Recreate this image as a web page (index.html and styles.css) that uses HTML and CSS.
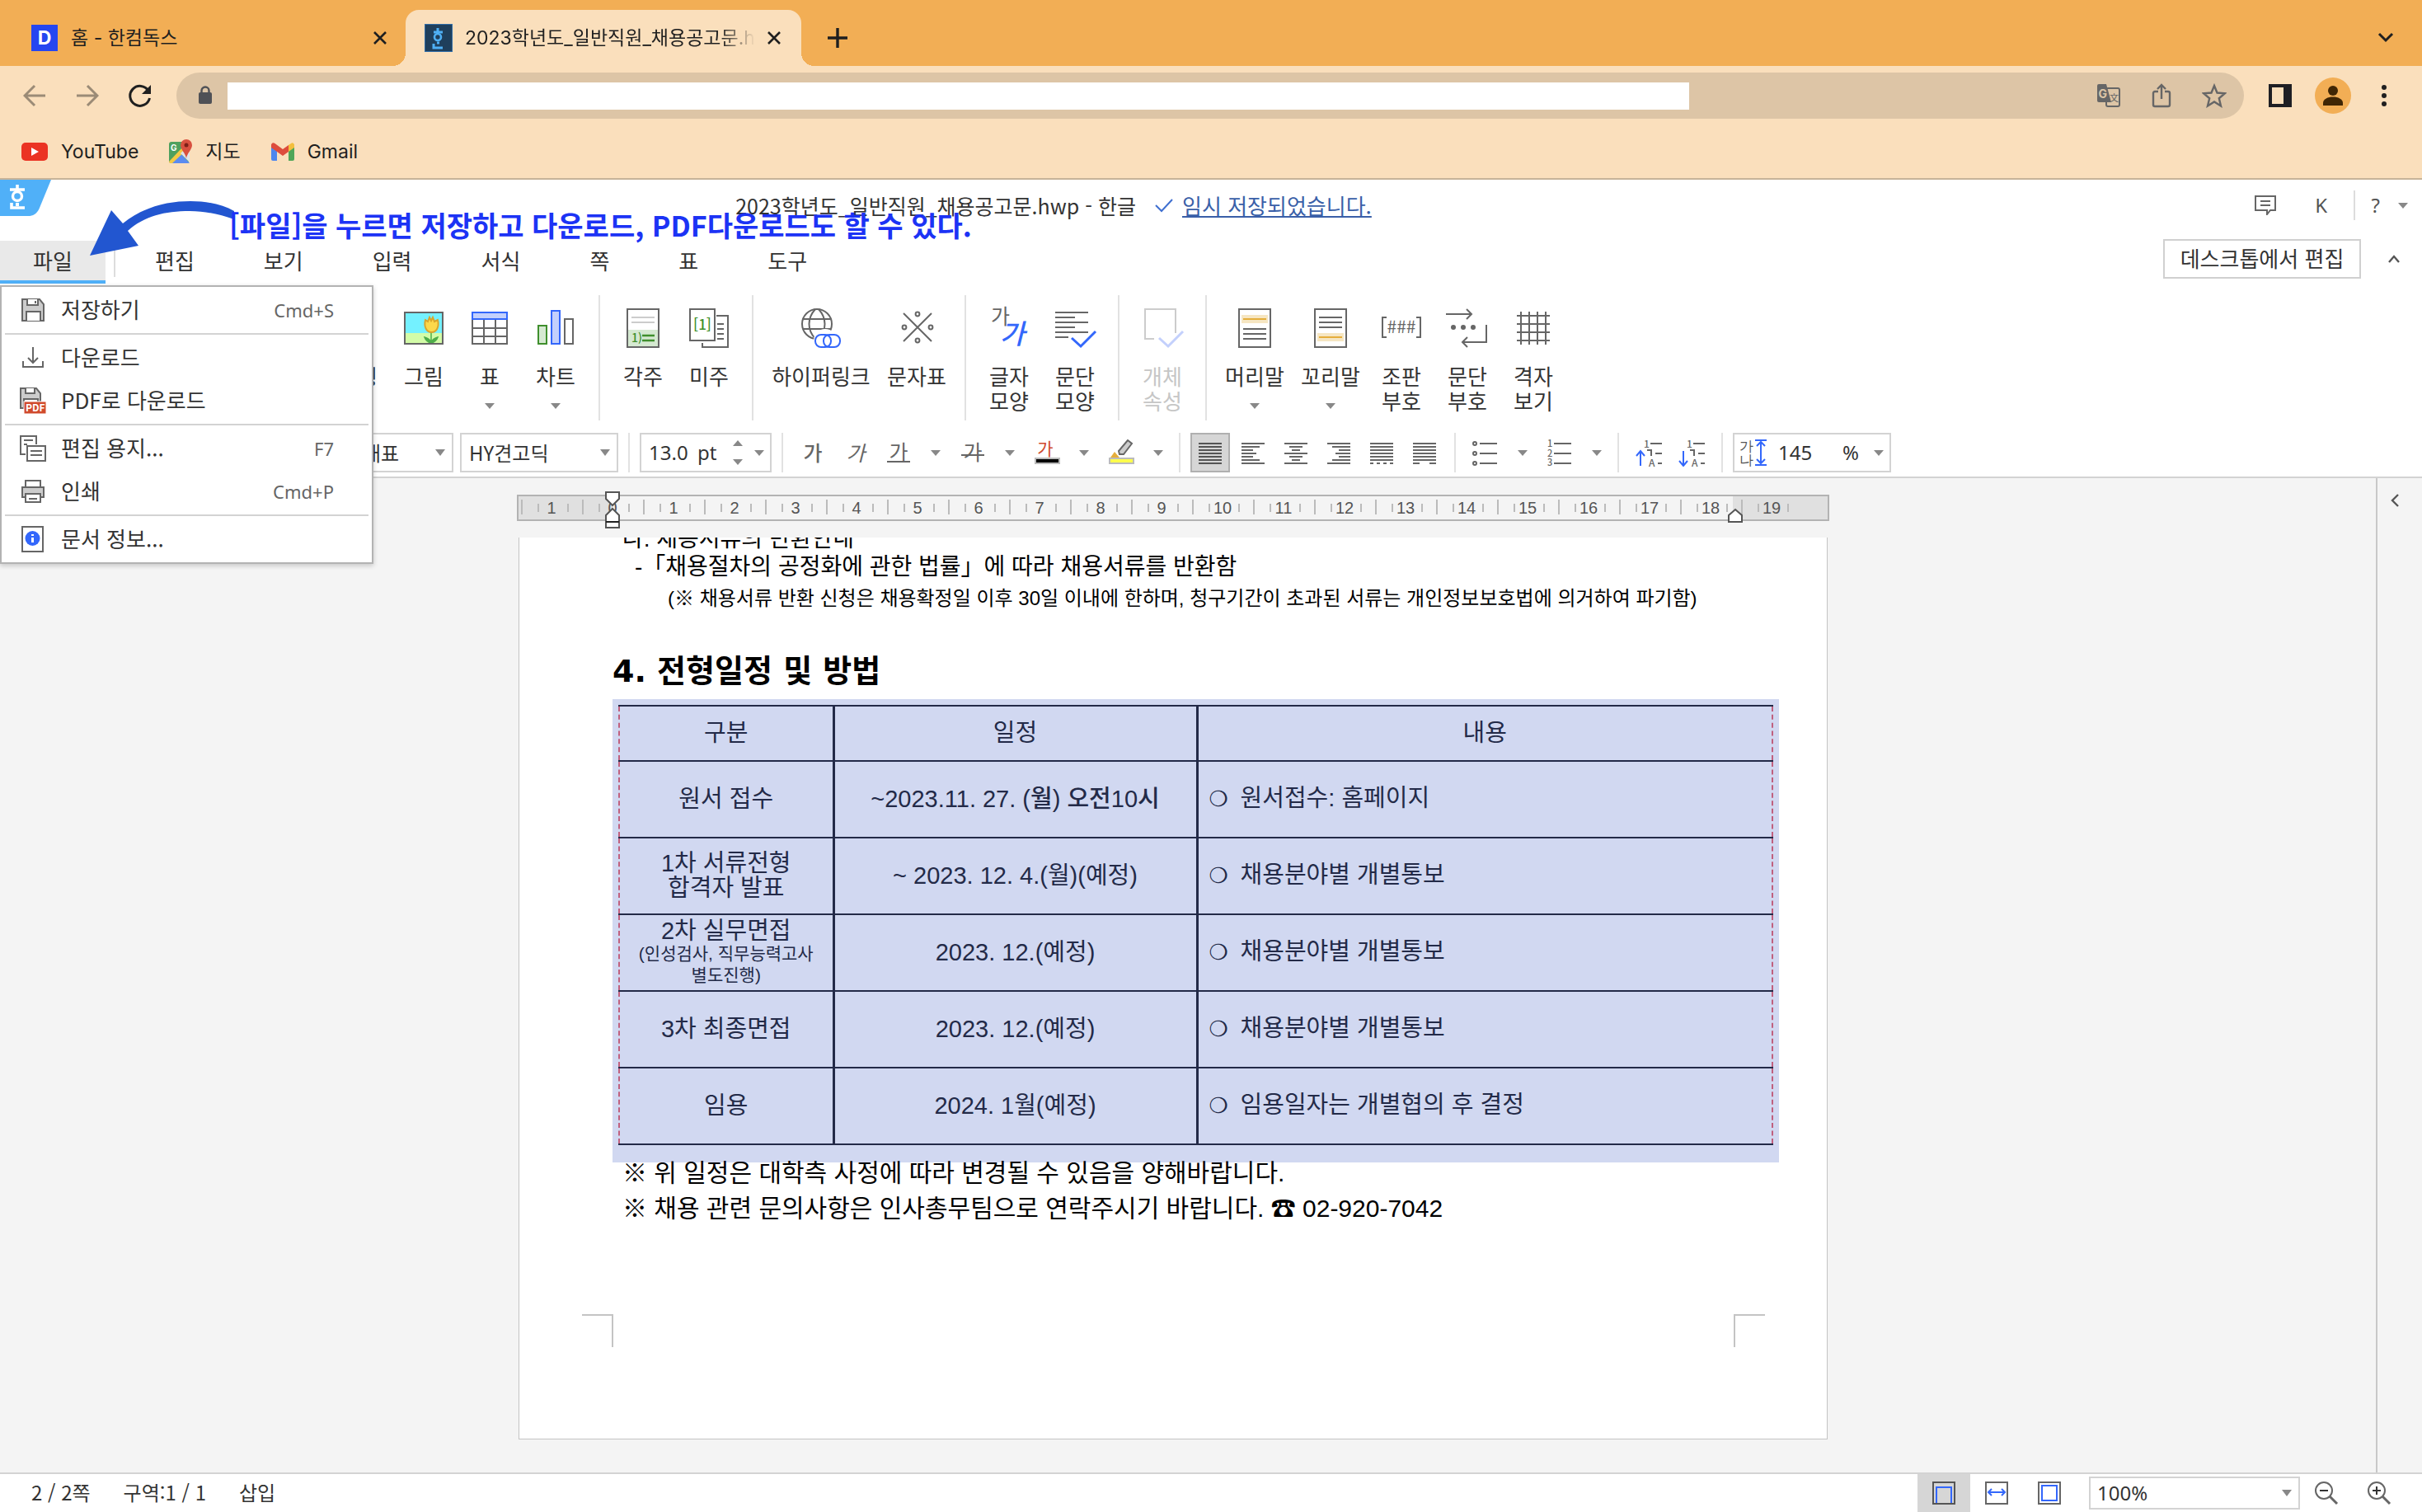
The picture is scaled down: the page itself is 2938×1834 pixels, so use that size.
FILE: index.html
```html
<!DOCTYPE html>
<html lang="ko">
<head>
<meta charset="utf-8">
<title>2023학년도_일반직원_채용공고문.hwp - 한글</title>
<link rel="stylesheet" href="styles.css">
</head>
<body>
<header class="browser">
  <div class="tabstrip">
    <div class="tab">
      <span class="fav fav-d">D</span>
      <span class="tab-title">홈 - 한컴독스</span>
      <button class="tab-x" aria-label="탭 닫기"><svg width="18" height="18" viewBox="0 0 18 18"><path d="M2 2L16 16M16 2L2 16" stroke="#1f1f1f" stroke-width="2.600"/></svg></button>
    </div>
    <div class="tab tab-active">
      <span class="fav fav-h"><svg width="32" height="32" viewBox="0 0 32 32"><path d="M15 4V9M10 9H21M21 28H10V23" fill="none" stroke="#4fb0f5" stroke-width="3"/><circle cx="15" cy="15" r="4" fill="none" stroke="#4fb0f5" stroke-width="2.600"/><path d="M14 22H17" stroke="#4fb0f5" stroke-width="3"/></svg></span>
      <span class="tab-title tab-fade">2023학년도_일반직원_채용공고문.hwp</span>
      <button class="tab-x" aria-label="탭 닫기"><svg width="18" height="18" viewBox="0 0 18 18"><path d="M2 2L16 16M16 2L2 16" stroke="#1f1f1f" stroke-width="2.600"/></svg></button>
    </div>
    <button class="tab-new" aria-label="새 탭"><svg width="24" height="24" viewBox="0 0 24 24"><path d="M12 0V24M0 12H24" stroke="#1f1f1f" stroke-width="3.400"/></svg></button>
    <button class="tab-search" aria-label="탭 검색"><svg width="20" height="14" viewBox="0 0 20 14"><path d="M2 2L10 10L18 2" fill="none" stroke="#1f1f1f" stroke-width="3"/></svg></button>
  </div>
  <div class="navbar">
    <button aria-label="뒤로"><svg width="28" height="28" viewBox="0 0 28 28"><path d="M27 14H3M14 2L2 14L14 26" fill="none" stroke="#9b8b76" stroke-width="3"/></svg></button>
    <button aria-label="앞으로"><svg width="28" height="28" viewBox="0 0 28 28"><path d="M1 14H25M14 2L26 14L14 26" fill="none" stroke="#9b8b76" stroke-width="3"/></svg></button>
    <button aria-label="새로고침"><svg width="28" height="28" viewBox="0 0 28 28"><path d="M24 8A12 12 0 1 0 25.500 17" fill="none" stroke="#1f1f1f" stroke-width="3"/><path d="M27 1V12H16Z" fill="#1f1f1f"/></svg></button>
    <div class="omnibox">
      <svg width="18" height="24" viewBox="0 0 18 24"><path d="M4.500 10V6A4.500 4.500 0 0 1 13.500 6V10" fill="none" stroke="#4f5156" stroke-width="2.400"/><rect x="1" y="8" width="16" height="14" rx="2" fill="#4f5156"/></svg>
      <input class="url" type="text" aria-label="주소">
      <button aria-label="번역"><svg width="32" height="32" viewBox="0 0 32 32"><rect x="13" y="7" width="16" height="22" rx="2" fill="none" stroke="#666" stroke-width="2"/><path d="M4 2H13L19 24H4A2 2 0 0 1 2 22V4A2 2 0 0 1 4 2Z" fill="#666"/><text x="3.500" y="19" font-size="14" font-weight="700" fill="#ddc5a6">G</text><text x="17" y="23" font-size="11" fill="#666">文</text></svg></button>
      <button aria-label="공유"><svg width="26" height="30" viewBox="0 0 26 30"><path d="M9 10H5A2 2 0 0 0 3 12V26A2 2 0 0 0 5 28H21A2 2 0 0 0 23 26V12A2 2 0 0 0 21 10H17M13 19V3M8 7L13 2L18 7" fill="none" stroke="#666" stroke-width="2.400"/></svg></button>
      <button aria-label="북마크"><svg width="30" height="30" viewBox="0 0 30 30"><path d="M15 3L18.500 11.500L28 12.200L20.800 18.300L23 27.500L15 22.500L7 27.500L9.200 18.300L2 12.200L11.500 11.500Z" fill="none" stroke="#666" stroke-width="2.400"/></svg></button>
    </div>
    <button aria-label="사이드 패널"><svg width="28" height="28" viewBox="0 0 28 28"><rect x="2" y="2" width="24" height="24" fill="none" stroke="#1f1f24" stroke-width="4"/><rect x="18" y="0" width="10" height="28" fill="#1f1f24"/></svg></button>
    <button class="profile" aria-label="프로필"><svg width="44" height="44" viewBox="0 0 44 44"><circle cx="22" cy="22" r="22" fill="#f2ae55"/><circle cx="22" cy="16" r="6" fill="#402604"/><path d="M10 34V31C10 26 16 23.500 22 23.500S34 26 34 31V34Z" fill="#402604"/></svg></button>
    <button aria-label="메뉴"><svg width="8" height="28" viewBox="0 0 8 28"><circle cx="4" cy="4" r="3" fill="#1f1f1f"/><circle cx="4" cy="14" r="3" fill="#1f1f1f"/><circle cx="4" cy="24" r="3" fill="#1f1f1f"/></svg></button>
  </div>
  <nav class="bookmarks">
    <a href="#"><svg width="34" height="24" viewBox="0 0 34 24"><rect x="1" y="1" width="32" height="22" rx="5" fill="#eb3323"/><path d="M13 7L22 12L13 17Z" fill="#fff"/></svg>YouTube</a>
    <a href="#"><svg width="30" height="32" viewBox="0 0 30 32"><rect x="1" y="4" width="24" height="26" rx="3" fill="#4ea05e"/><path d="M2 30L14 17L26 30Z" fill="#5b8bf0"/><path d="M1 28L18 10L22 14L5 30H2Z" fill="#f3c944"/><path d="M15 18L26 29V18L20 13Z" fill="#dfe3e8"/><text x="3" y="15" font-size="10" font-weight="700" fill="#fff">G</text><path d="M22 24C21 18 15 13 15 8A7 7 0 0 1 29 8C29 13 23 18 22 24Z" fill="#d8503f"/><circle cx="22" cy="8" r="2.500" fill="#7d2018"/></svg>지도</a>
    <a href="#"><svg width="30" height="24" viewBox="0 0 30 24"><path d="M1 3V21A2 2 0 0 0 3 23H8V9Z" fill="#4e86ee"/><path d="M29 3V21A2 2 0 0 1 27 23H22V9Z" fill="#4fa658"/><path d="M22 4L25 2C27 0 29 2 29 4V7L22 12Z" fill="#f3bf3e"/><path d="M1 4C1 2 3 0 5.500 2L15 9L22 4V12L15 17L1 7Z" fill="#dd4c3c"/></svg>Gmail</a>
  </nav>
</header>

<div class="titlebar">
  <svg class="logo" width="62" height="44" viewBox="0 0 62 44"><path d="M0 0H62L48 34C45 41 41 44 34 44H0Z" fill="#50b0f8"/><path d="M21 6V12M12 12H30M30 34H14V28" fill="none" stroke="#fff" stroke-width="3.600"/><circle cx="21" cy="20" r="5.500" fill="none" stroke="#fff" stroke-width="3.400"/><path d="M19 30H23" stroke="#fff" stroke-width="4"/></svg>
  <div class="doc-title">
    <span>2023학년도_일반직원_채용공고문.hwp - 한글</span>
    <a href="#"><svg width="24" height="18" viewBox="0 0 24 18"><path d="M2 9L9 16L22 2" fill="none" stroke="#3f6fd0" stroke-width="2"/></svg><u>임시 저장되었습니다.</u></a>
  </div>
  <div class="title-tools">
    <button aria-label="메모"><svg width="26" height="24" viewBox="0 0 26 24"><path d="M1 1H25V18H19L15 23V18H1Z" fill="none" stroke="#666" stroke-width="2"/><path d="M7 7H19M7 12H19" stroke="#666" stroke-width="2"/></svg></button>
    <button class="user">K</button>
    <button class="help">?<i class="caret"></i></button>
  </div>
</div>

<div class="menubar">
  <div class="file">
    <button class="file-tab">파일</button>
    <div class="file-menu" role="menu">
      <button role="menuitem"><svg width="32" height="32" viewBox="0 0 32 32"><path d="M3 3H24L29 9V29H3Z" fill="#ccc" stroke="#666" stroke-width="2"/><path d="M9 3V10H22V3M8 29V18H25V29" fill="#fff" stroke="#666" stroke-width="2"/><path d="M19 5V8" stroke="#666" stroke-width="2"/></svg><span>저장하기</span><kbd>Cmd+S</kbd></button>
      <hr>
      <button role="menuitem"><svg width="32" height="32" viewBox="0 0 32 32"><path d="M16 3V22M10 16L16 22L22 16M4 20V27H28V20" fill="none" stroke="#666" stroke-width="2"/></svg><span>다운로드</span></button>
      <button role="menuitem"><svg width="32" height="32" viewBox="0 0 32 32"><path d="M1 1H20L25 7V25H1Z" fill="#ccc" stroke="#666" stroke-width="2"/><path d="M7 1V7H18V1M5 25V14H22V25" fill="#fff" stroke="#666" stroke-width="2"/><rect x="5" y="17" width="27" height="15" fill="#d04a2c" stroke="#fff"/><text x="7" y="29" font-size="12" font-weight="700" fill="#fff">PDF</text></svg><span>PDF로 다운로드</span></button>
      <hr>
      <button role="menuitem"><svg width="32" height="32" viewBox="0 0 32 32"><path d="M7 23H1V1H20V11M5 6H16M5 11H9" fill="none" stroke="#666" stroke-width="2"/><path d="M9 13H31V31H9ZM13 19H27M13 24H27" fill="none" stroke="#666" stroke-width="2"/></svg><span>편집 용지...</span><kbd>F7</kbd></button>
      <button role="menuitem"><svg width="32" height="32" viewBox="0 0 32 32"><path d="M7 11V3H25V11" fill="#fff" stroke="#666" stroke-width="2"/><rect x="3" y="11" width="26" height="12" fill="#ccc" stroke="#666" stroke-width="2"/><path d="M7 19H25V29H7ZM11 25H21" fill="#fff" stroke="#666" stroke-width="2"/></svg><span>인쇄</span><kbd>Cmd+P</kbd></button>
      <hr>
      <button role="menuitem"><svg width="32" height="32" viewBox="0 0 32 32"><rect x="3" y="1" width="25" height="30" fill="#fff" stroke="#666" stroke-width="2"/><circle cx="15.500" cy="15" r="9" fill="#3367fb"/><path d="M15.500 14V20M15.500 10V12" stroke="#fff" stroke-width="3"/></svg><span>문서 정보...</span></button>
    </div>
  </div>
  <button class="menu">편집</button>
  <button class="menu">보기</button>
  <button class="menu">입력</button>
  <button class="menu">서식</button>
  <button class="menu">쪽</button>
  <button class="menu">표</button>
  <button class="menu">도구</button>
  <button class="desktop">데스크톱에서 편집</button>
  <button class="collapse" aria-label="접기"><svg width="16" height="12" viewBox="0 0 16 12"><path d="M2 10L8 3L14 10" fill="none" stroke="#555" stroke-width="2.400"/></svg></button>
  <div class="note">
    <svg width="180" height="70" viewBox="108 242 180 70"><path d="M109 310L135 255L149 271C175 250 205 244 231 244C252 244 270 248 284 256V266C266 260 250 256 230 256C200 256 175 262 155 280L168 298Z" fill="#2256d0"/></svg>
    <strong>[파일]을 누르면 저장하고 다운로드, PDF다운로드도 할 수 있다.</strong>
  </div>
</div>

<div class="ribbon">
  <div class="group">
    <button class="tool"><svg width="52" height="48"></svg>도형</button>
    <button class="tool"><svg width="52" height="48" viewBox="0 0 52 48"><rect x="3" y="5" width="46" height="38" fill="#74f1ff"/><rect x="3" y="30" width="46" height="13" fill="#d3fca8"/><path d="M35 43V29M35 42C31 41 28 38 27 35C31 36 34 38 35 42C36 38 39 36 43 35C42 38 39 41 35 42" fill="#4fae4a" stroke="#4fae4a" stroke-width="1.500"/><path d="M28 14L31 16L33 11L35 15L37 11L39 16L43 14C45 22 42 29 35.500 29S26 22 28 14Z" fill="#fbd84b" stroke="#d9a52c" stroke-width="2"/><rect x="3" y="5" width="46" height="38" fill="none" stroke="#666" stroke-width="2"/></svg>그림</button>
    <button class="tool"><svg width="52" height="48" viewBox="0 0 52 48"><path d="M5 14V43H47V14M5 24H47M5 34H47M19 14V43M33 14V43" fill="none" stroke="#666" stroke-width="2"/><rect x="5" y="5" width="42" height="8" fill="#c3d0fc" stroke="#3367fb" stroke-width="2"/></svg>표<i class="caret"></i></button>
    <button class="tool"><svg width="52" height="48" viewBox="0 0 52 48"><rect x="5" y="21" width="10" height="22" fill="#d5e9d1" stroke="#3f8f2d" stroke-width="2"/><rect x="21" y="3" width="10" height="40" fill="#c3d0fc" stroke="#3367fb" stroke-width="2"/><rect x="37" y="13" width="10" height="30" fill="#fff" stroke="#666" stroke-width="2"/></svg>차트<i class="caret"></i></button>
  </div>
  <div class="group">
    <button class="tool"><svg width="52" height="48" viewBox="0 0 52 48"><rect x="7" y="26" width="38" height="21" fill="#d5e9d1"/><path d="M12 11H40M12 17H40" stroke="#ccc" stroke-width="2"/><path d="M25 33H40M25 39H40" stroke="#3f8f2d" stroke-width="2.400"/><text x="12" y="41" font-size="14" font-weight="500" fill="#3f8f2d">1)</text><rect x="7" y="1" width="38" height="46" fill="none" stroke="#666" stroke-width="2"/></svg>각주</button>
    <button class="tool"><svg width="52" height="48" viewBox="0 0 52 48"><path d="M35 9H49V47H18V42M36 19H44M36 25H44M36 31H44M36 37H44" fill="none" stroke="#666" stroke-width="2"/><rect x="3" y="1" width="30" height="38" fill="#fff" stroke="#666" stroke-width="2"/><text x="18" y="26" font-size="17" font-weight="500" text-anchor="middle" fill="#3f8f2d">[1]</text></svg>미주</button>
  </div>
  <div class="group">
    <button class="tool tool-xl"><svg width="52" height="48" viewBox="0 0 52 48"><circle cx="21" cy="19" r="18" fill="none" stroke="#666" stroke-width="2"/><path d="M19 1C9 12 9 26 19 37M23 1C33 12 33 26 23 37M5 13H37M4 25H38" fill="none" stroke="#666" stroke-width="2"/><circle cx="31" cy="39" r="14" fill="#fff"/><rect x="19" y="32" width="19" height="15" rx="7" fill="#fff" stroke="#3367fb" stroke-width="2"/><rect x="29" y="32" width="20" height="15" rx="7" fill="none" stroke="#3367fb" stroke-width="2"/></svg>하이퍼링크</button>
    <button class="tool tool-l"><svg width="52" height="48" viewBox="0 0 52 48"><g fill="none" stroke="#666" stroke-width="2"><path d="M10 6L44 40M44 6L10 40"/><circle cx="27" cy="7" r="2.400"/><circle cx="27" cy="39" r="2.400"/><circle cx="11" cy="23" r="2.400"/><circle cx="43" cy="23" r="2.400"/></g></svg>문자표</button>
  </div>
  <div class="group">
    <button class="tool"><svg width="52" height="48" viewBox="0 0 52 48"><text x="4" y="19" font-size="25" fill="#666">가</text><text x="15" y="43" font-size="33" font-style="italic" font-weight="500" fill="#3367fb">가</text></svg>글자<br>모양</button>
    <button class="tool"><svg width="52" height="48" viewBox="0 0 52 48"><path d="M2 5H42M2 11H26M2 17H42M2 23H26M2 29H42M2 35H18" stroke="#666" stroke-width="2"/><path d="M22 36L33 46L51 28" fill="none" stroke="#3367fb" stroke-width="3"/></svg>문단<br>모양</button>
  </div>
  <div class="group">
    <button class="tool" disabled><svg width="52" height="48" viewBox="0 0 52 48"><path d="M42 30V1H5V37H16" fill="none" stroke="#ccc" stroke-width="2"/><path d="M22 36L33 46L51 28" fill="none" stroke="#c3d0fc" stroke-width="3"/></svg>개체<br>속성</button>
  </div>
  <div class="group group-last">
    <button class="tool tool-l"><svg width="52" height="48" viewBox="0 0 52 48"><rect x="7" y="1" width="38" height="46" fill="#fff" stroke="#666" stroke-width="2"/><rect x="10" y="8" width="32" height="10" fill="#f6e6c2"/><path d="M12 13H40" stroke="#e5ae3c" stroke-width="2"/><path d="M12 25H40M12 31H40M12 37H40" stroke="#666" stroke-width="2"/></svg>머리말<i class="caret"></i></button>
    <button class="tool tool-l"><svg width="52" height="48" viewBox="0 0 52 48"><rect x="7" y="1" width="38" height="46" fill="#fff" stroke="#666" stroke-width="2"/><rect x="10" y="30" width="32" height="10" fill="#f6e6c2"/><path d="M12 35H40" stroke="#e5ae3c" stroke-width="2"/><path d="M12 11H40M12 17H40M12 23H40" stroke="#666" stroke-width="2"/></svg>꼬리말<i class="caret"></i></button>
    <button class="tool"><svg width="52" height="48" viewBox="0 0 52 48"><path d="M8 11H3V35H8M44 11H49V35H44" fill="none" stroke="#666" stroke-width="2"/><text x="26" y="30" font-size="21" text-anchor="middle" fill="#666">###</text></svg>조판<br>부호</button>
    <button class="tool"><svg width="52" height="48" viewBox="0 0 52 48"><path d="M0 7H31M25 1L31 7L25 13M49 20V41H20M26 35L20 41L26 47" fill="none" stroke="#666" stroke-width="2"/><circle cx="9" cy="23" r="3" fill="#666"/><circle cx="21" cy="23" r="3" fill="#666"/><circle cx="33" cy="23" r="3" fill="#666"/></svg>문단<br>부호</button>
    <button class="tool"><svg width="52" height="48" viewBox="0 0 52 48"><path d="M11 4V44M21 4V44M31 4V44M41 4V44M6 9H46M6 19H46M6 29H46M6 39H46" stroke="#666" stroke-width="2"/></svg>격자<br>보기</button>
  </div>
</div>

<div class="format">
  <select class="sel sel-lang" aria-label="언어"><option>대표</option></select>
  <select class="sel sel-font" aria-label="글꼴"><option>HY견고딕</option></select>
  <span class="sep"></span>
  <div class="num num-size"><input type="text" value="13.0" aria-label="글자 크기"><span>pt</span><span class="spin"><i class="caret caret-up"></i><i class="caret"></i></span><i class="caret"></i></div>
  <span class="sep"></span>
  <div class="set">
    <button aria-label="진하게"><svg width="32" height="32" viewBox="0 0 32 32"><text x="16" y="26" font-size="25" font-weight="500" text-anchor="middle" fill="#666">가</text></svg></button>
    <button aria-label="기울임"><svg width="32" height="32" viewBox="0 0 32 32"><text x="16" y="26" font-size="25" font-style="italic" text-anchor="middle" fill="#666">가</text></svg></button>
    <button aria-label="밑줄"><svg width="32" height="32" viewBox="0 0 32 32"><text x="16" y="25" font-size="25" text-anchor="middle" fill="#666">가</text><path d="M2 27H30" stroke="#666" stroke-width="2"/></svg></button>
    <button class="drop" aria-label="밑줄 종류"><i class="caret"></i></button>
    <button aria-label="취소선"><svg width="32" height="32" viewBox="0 0 32 32"><text x="16" y="25" font-size="25" text-anchor="middle" fill="#666">가</text><path d="M2 19H30" stroke="#666" stroke-width="2"/></svg></button>
    <button class="drop" aria-label="취소선 종류"><i class="caret"></i></button>
    <button aria-label="글자 색"><svg width="32" height="32" viewBox="0 0 32 32"><text x="14" y="19" font-size="21" text-anchor="middle" fill="#d04a2c">가</text><rect x="2" y="23" width="29" height="6" stroke="#bbb" stroke-width="2"/></svg></button>
    <button class="drop" aria-label="글자 색 선택"><i class="caret"></i></button>
    <button aria-label="형광펜"><svg width="32" height="32" viewBox="0 0 32 32"><path d="M24 1L29 5L19 18H14L13 14Z" fill="#ccc" stroke="#666" stroke-width="2"/><path d="M8 15L14 22H3Z" fill="#e5ae3c"/><rect x="2" y="23" width="29" height="6" fill="#ffff4d" stroke="#bbb" stroke-width="2"/></svg></button>
    <button class="drop" aria-label="형광펜 색"><i class="caret"></i></button>
  </div>
  <span class="sep"></span>
  <div class="set">
    <button class="on" aria-label="양쪽 정렬"><svg width="32" height="32" viewBox="0 0 32 32"><path d="M2 5H30M2 9H30M2 13H30M2 17H30M2 21H30M2 25H30M2 29H30" stroke="#555" stroke-width="2"/></svg></button>
    <button aria-label="왼쪽 정렬"><svg width="32" height="32" viewBox="0 0 32 32"><path d="M2 5H30M2 9H24M2 13H16M2 17H20M2 21H16M2 25H24M2 29H30" stroke="#666" stroke-width="2"/></svg></button>
    <button aria-label="가운데 정렬"><svg width="32" height="32" viewBox="0 0 32 32"><path d="M2 5H30M8 9H24M11 13H21M2 17H30M8 21H24M11 25H21M2 29H30" stroke="#666" stroke-width="2"/></svg></button>
    <button aria-label="오른쪽 정렬"><svg width="32" height="32" viewBox="0 0 32 32"><path d="M2 5H30M8 9H30M16 13H30M12 17H30M16 21H30M8 25H30M2 29H30" stroke="#666" stroke-width="2"/></svg></button>
    <button aria-label="배분 정렬"><svg width="32" height="32" viewBox="0 0 32 32"><path d="M2 5H30M2 9H30M2 13H30M2 17H30M2 21H30M2 25H30" stroke="#666" stroke-width="2"/><path d="M2 29H30" stroke="#666" stroke-width="2" stroke-dasharray="4 4"/></svg></button>
    <button aria-label="나눔 정렬"><svg width="32" height="32" viewBox="0 0 32 32"><path d="M2 5H30M2 9H30M2 13H30M2 17H30M2 21H30M2 25H30M2 29H10M22 29H30" stroke="#666" stroke-width="2"/></svg></button>
  </div>
  <span class="sep sep-even"></span>
  <div class="set">
    <button aria-label="글머리표"><svg width="32" height="32" viewBox="0 0 32 32"><path d="M9 5H30M9 17H30M9 29H30" stroke="#666" stroke-width="2"/><g fill="none" stroke="#666" stroke-width="2"><circle cx="3" cy="5" r="2"/><circle cx="3" cy="17" r="2"/><circle cx="3" cy="29" r="2"/></g></svg></button>
    <button class="drop" aria-label="글머리표 종류"><i class="caret"></i></button>
    <button aria-label="문단 번호"><svg width="32" height="32" viewBox="0 0 32 32"><path d="M9 5H30M9 17H30M9 29H30" stroke="#666" stroke-width="2"/><g font-size="11" font-weight="500" fill="#666"><text x="1" y="9">1</text><text x="1" y="21">2</text><text x="1" y="32">3</text></g></svg></button>
    <button class="drop" aria-label="문단 번호 종류"><i class="caret"></i></button>
  </div>
  <span class="sep"></span>
  <div class="set">
    <button aria-label="한 수준 증가"><svg width="34" height="34" viewBox="0 0 34 34"><path d="M7 33V16M2 21L7 15L12 21" fill="none" stroke="#3367fb" stroke-width="2"/><path d="M19 6H33M25 18H33M28 30H33M15 14H20V21" fill="none" stroke="#666" stroke-width="2"/><g font-size="12" font-weight="500" fill="#666"><text x="11" y="11">1</text><text x="17" y="34">A</text></g></svg></button>
    <button aria-label="한 수준 감소"><svg width="34" height="34" viewBox="0 0 34 34"><path d="M7 15V32M2 27L7 33L12 27" fill="none" stroke="#3367fb" stroke-width="2"/><path d="M19 6H33M25 18H33M28 30H33M15 14H20V21" fill="none" stroke="#666" stroke-width="2"/><g font-size="12" font-weight="500" fill="#666"><text x="11" y="11">1</text><text x="17" y="34">A</text></g></svg></button>
  </div>
  <span class="sep sep-even"></span>
  <div class="num num-line"><svg width="34" height="34" viewBox="0 0 34 34"><g font-size="17" fill="#555"><text x="0" y="15">가</text><text x="0" y="32">나</text></g><path d="M19 2H33M19 32H33M26 4V30M21 9L26 4L31 9M21 25L26 30L31 25" fill="none" stroke="#3367fb" stroke-width="2"/></svg><input type="text" value="145" aria-label="줄 간격"><span>%</span><i class="caret"></i></div>
</div>

<div class="workspace">
  <main class="canvas">
    <div class="ruler">
      <span>1</span><span>0</span><span>1</span><span>2</span><span>3</span><span>4</span><span>5</span><span>6</span><span>7</span><span>8</span><span>9</span><span>10</span><span>11</span><span>12</span><span>13</span><span>14</span><span>15</span><span>16</span><span>17</span><span>18</span><span>19</span>
      <svg class="mark mark-left" width="20" height="48" viewBox="0 0 20 48"><path d="M2 2H18V10L10 18L2 10ZM10 22L18 30V45H2V30Z" fill="#fff" stroke="#555" stroke-width="2"/><path d="M2 38H18" stroke="#222" stroke-width="2"/></svg>
      <svg class="mark mark-right" width="20" height="20" viewBox="0 0 20 20"><path d="M10 2L18 9V17H2V9Z" fill="#fff" stroke="#555" stroke-width="2"/></svg>
    </div>
    <article class="paper">
      <div class="line line-cut"><p>나. 채용서류의 반환안내</p></div>
      <p class="line line-dash">-「채용절차의 공정화에 관한 법률」에 따라 채용서류를 반환함</p>
      <p class="line line-small">(※ 채용서류 반환 신청은 채용확정일 이후 30일 이내에 한하며, 청구기간이 초과된 서류는 개인정보보호법에 의거하여 파기함)</p>
      <h2>4. 전형일정 및 방법</h2>
      <div class="selection">
        <table>
          <colgroup><col class="c1"><col class="c2"><col></colgroup>
          <thead><tr><th>구분</th><th>일정</th><th>내용</th></tr></thead>
          <tbody>
            <tr><td>원서 접수</td><td class="strong">~2023.11. 27. (월) 오전10시</td><td><span class="bullet">❍</span> 원서접수: 홈페이지</td></tr>
            <tr><td>1차 서류전형<br>합격자 발표</td><td>~ 2023. 12. 4.(월)(예정)</td><td><span class="bullet">❍</span> 채용분야별 개별통보</td></tr>
            <tr><td>2차 실무면접<small>(인성검사, 직무능력고사<br>별도진행)</small></td><td>2023. 12.(예정)</td><td><span class="bullet">❍</span> 채용분야별 개별통보</td></tr>
            <tr><td>3차 최종면접</td><td>2023. 12.(예정)</td><td><span class="bullet">❍</span> 채용분야별 개별통보</td></tr>
            <tr><td>임용</td><td>2024. 1월(예정)</td><td><span class="bullet">❍</span> 임용일자는 개별협의 후 결정</td></tr>
          </tbody>
        </table>
      </div>
      <p class="remark remark-tight">※ 위 일정은 대학측 사정에 따라 변경될 수 있음을 양해바랍니다.</p>
      <p class="remark">※ 채용 관련 문의사항은 인사총무팀으로 연락주시기 바랍니다. ☎ 02-920-7042</p>
      <div class="corners"><i></i><i></i></div>
    </article>
  </main>
  <aside class="side"><button aria-label="작업 창 열기"><svg width="10" height="16" viewBox="0 0 10 16"><path d="M9 1L2 8L9 15" fill="none" stroke="#555" stroke-width="2.400"/></svg></button></aside>
</div>

<footer class="status">
  <span>2 / 2쪽</span><span>구역:1 / 1</span><span>삽입</span>
  <div class="views">
    <button class="on" aria-label="쪽 맞춤"><svg width="28" height="28" viewBox="0 0 28 28"><rect x="1" y="1" width="26" height="26" fill="none" stroke="#555" stroke-width="2"/><path d="M5 26V7H23V26" fill="none" stroke="#3367fb" stroke-width="2"/></svg></button>
    <button aria-label="폭 맞춤"><svg width="28" height="28" viewBox="0 0 28 28"><rect x="1" y="1" width="26" height="26" fill="none" stroke="#666" stroke-width="2"/><path d="M4 13H24M8 9L4 13L8 17M20 9L24 13L20 17" fill="none" stroke="#3367fb" stroke-width="2"/></svg></button>
    <button aria-label="전체 맞춤"><svg width="28" height="28" viewBox="0 0 28 28"><rect x="1" y="1" width="26" height="26" fill="none" stroke="#666" stroke-width="2"/><rect x="5" y="5" width="18" height="18" fill="none" stroke="#3367fb" stroke-width="2"/></svg></button>
    <select class="sel sel-zoom" aria-label="확대 비율"><option>100%</option></select>
    <button aria-label="축소"><svg width="30" height="30" viewBox="0 0 30 30"><circle cx="12" cy="12" r="10" fill="none" stroke="#666" stroke-width="2"/><path d="M19 19L28 28" stroke="#666" stroke-width="3"/><path d="M7 12H17" stroke="#333" stroke-width="2"/></svg></button>
    <button aria-label="확대"><svg width="30" height="30" viewBox="0 0 30 30"><circle cx="12" cy="12" r="10" fill="none" stroke="#666" stroke-width="2"/><path d="M19 19L28 28" stroke="#666" stroke-width="3"/><path d="M7 12H17M12 7V17" stroke="#333" stroke-width="2"/></svg></button>
  </div>
</footer>
</body>
</html>
```
FILE: styles.css
```css
* { box-sizing: border-box; }
body {
  margin: 0;
  min-height: 100vh;
  display: flex;
  flex-direction: column;
  background: #fff;
  color: #333;
  font: 26px/30px "Noto Sans CJK KR", "Noto Sans", sans-serif;
}
button, input, select { font: inherit; color: inherit; margin: 0; padding: 0; border: 0; background: none; border-radius: 0; }
button { display: flex; align-items: center; justify-content: center; flex: none; white-space: nowrap; }
a { color: inherit; text-decoration: none; }
p, h2 { margin: 0; }
svg { display: block; flex: none; }
kbd { font: inherit; }
.caret { display: block; border: 6px solid transparent; border-top: 7px solid #888; border-bottom: 0; }
.caret-up { border-top: 0; border-bottom: 7px solid #888; }

/* browser frame */
.browser { background: #fadfbc; border-bottom: 2px solid #c6b399; color: #1f1f1f; font: 23px/32px Inter, "Noto Sans CJK KR", sans-serif; }
.tabstrip { display: flex; align-items: flex-end; height: 80px; background: #f2ae55; }
.tab { display: flex; align-items: center; width: 492px; height: 68px; padding: 0 20px 0 38px; }
.tab-active { position: relative; width: 480px; padding: 0 22px 0 24px; background: #fadfbc; border-radius: 16px 16px 0 0; }
.tab-active::before, .tab-active::after { content: ""; position: absolute; bottom: 0; width: 16px; height: 16px; }
.tab-active::before { right: 100%; background: radial-gradient(circle at 0 0, #f2ae55 16px, #fadfbc 16px); }
.tab-active::after { left: 100%; background: radial-gradient(circle at 100% 0, #f2ae55 16px, #fadfbc 16px); }
.fav { flex: none; width: 32px; height: 32px; margin-right: 16px; text-align: center; font-weight: 700; }
.fav-d { background: #2546f0; color: #fff; }
.fav-h { background: #1f3f5c; outline: 1px solid #2f6ca8; }
.tab-title { flex: 1; overflow: hidden; white-space: nowrap; }
.tab-fade { mask-image: linear-gradient(90deg, #000 88%, transparent); }
.tab-x { width: 22px; margin-left: 12px; }
.tab-new { width: 24px; height: 68px; margin-left: 32px; }
.tab-search { height: 68px; margin: 0 34px 0 auto; }
.navbar { display: flex; align-items: center; height: 72px; padding: 0 42px 0 28px; gap: 36px; }
.omnibox { flex: 1; display: flex; align-items: center; height: 56px; margin: 0 -6px; padding: 0 20px 0 26px; background: #ddc5a6; border-radius: 28px; }
.url { width: 72%; height: 33px; margin: 0 auto 0 18px; background: #fff; font-size: 20px; }
.omnibox button { width: 64px; }
.omnibox button:last-child { margin-right: -16px; }
.profile { margin-left: -8px; }
.bookmarks { display: flex; gap: 36px; height: 64px; padding-left: 25px; }
.bookmarks a { display: flex; align-items: center; gap: 15px; }

/* title row */
.titlebar { display: flex; height: 62px; }
.doc-title { flex: 1; display: flex; align-items: center; justify-content: center; gap: 22px; font-size: 25px; white-space: nowrap; }
.doc-title a { display: flex; align-items: center; gap: 10px; color: #3a5fa8; font-size: 26px; }
.title-tools { display: flex; align-items: center; justify-content: flex-end; width: 444px; padding-right: 17px; color: #555; font-family: "Noto Sans", sans-serif; font-size: 24px; }
.user { width: 94px; padding-left: 16px; }
.help { height: 36px; padding-left: 20px; gap: 22px; border-left: 2px solid #ddd; }

/* menu row */
.menubar { position: relative; display: flex; padding-top: 10px; height: 66px; }
.file { position: relative; margin-right: 18px; padding-top: 2px; }
.file::after { content: ""; position: absolute; top: 2px; right: -12px; width: 2px; height: 44px; background: #ddd; }
.file-tab { width: 128px; height: 52px; background: #e9e9e9; border-bottom: 4px solid #50b0f8; }
.menu { height: 52px; padding: 0 42px; }
.desktop { margin-left: auto; width: 240px; height: 48px; padding-bottom: 2px; border: 2px solid #d0d0d0; }
.collapse { width: 16px; height: 48px; margin: 0 26px 0 32px; }
.note { position: absolute; left: 108px; top: -38px; display: flex; color: #1c33f5; z-index: 3; pointer-events: none; }
.note strong { margin: 6px 0 0 -10px; font-size: 34px; line-height: 50px; white-space: nowrap; }
.file-menu { position: absolute; left: 0; top: 56px; width: 453px; padding: 2px 4px; background: #fff; border: 2px solid #b3b3b3; box-shadow: 0 2px 6px rgba(0,0,0,.2); z-index: 4; }
.file-menu button { width: 100%; height: 52px; padding: 0 42px 0 18px; gap: 18px; }
.file-menu span { flex: 1; padding-bottom: 2px; text-align: left; }
.file-menu kbd { color: #666; font-family: "Noto Sans", sans-serif; font-size: 22px; }
.file-menu hr { margin: 2px 0; border: 0; height: 2px; background: #d3d3d3; }

/* ribbon */
.ribbon { display: flex; padding: 12px 0 16px 382px; }
.group { display: flex; height: 152px; padding: 0 12px; border-right: 2px solid #e2e2e2; }
.group-last { border-right: 0; }
.tool { flex-direction: column; justify-content: flex-start; width: 80px; padding-top: 16px; }
.tool svg { margin-bottom: 19px; overflow: visible; }
.tool .caret { margin-top: 18px; }
.tool-l { width: 92px; }
.tool-xl { width: 140px; }
.tool:disabled { color: #c6c6c6; }

/* formatting bar */
.format { display: flex; align-items: center; height: 54px; padding: 0 0 6px 429px; border-bottom: 2px solid #d3d3d3; font-size: 24px; }
.sel { appearance: none; height: 48px; padding-left: 9px; border: 2px solid #d3d3d3; background: #fff url("data:image/svg+xml,%3Csvg xmlns='http://www.w3.org/2000/svg' width='12' height='8'%3E%3Cpath d='M0 0H12L6 8Z' fill='%23888'/%3E%3C/svg%3E") no-repeat right 8px center; }
.sel-lang { width: 121px; margin-right: 8px; }
.sel-font { width: 192px; }
.sep { width: 2px; height: 48px; margin: 0 12px; background: #e2e2e2; }
.set + .sep { margin-left: 8px; }
.set + .sep-even { margin-left: 12px; }
.num { display: flex; align-items: center; height: 48px; border: 2px solid #d3d3d3; font-family: "Noto Sans", sans-serif; font-size: 24px; }
.num-size { width: 160px; padding: 0 7px 0 9px; }
.num-size input { width: 59px; }
.spin { display: grid; gap: 16px; margin: 0 14px 0 auto; }
.num-line { width: 192px; padding: 0 7px 0 6px; }
.num-line input { width: 78px; margin-left: 13px; }
.num-line .caret { margin-left: auto; }
.set { display: flex; gap: 4px; }
.set button { width: 48px; height: 48px; }
.set .drop { width: 34px; }
.on { background: #d6d6d6; }
.set .on { border: 2px solid #b0b0b0; }

/* document area */
.workspace { flex: 1; display: flex; background: #f4f4f4; }
.canvas { flex: 1; display: flex; flex-direction: column; align-items: center; padding: 20px 36px 40px 0; }
.side { width: 56px; border-left: 2px solid #c8c8c8; }
.side button { width: 42px; height: 54px; }
.ruler { position: relative; display: flex; width: 1592px; height: 32px; margin-bottom: 20px; padding-left: 3px; border: 2px solid #b3b3b3; background: linear-gradient(90deg, #e0e0e0 114px, #f4f4f4 114px 1473px, #e0e0e0 1473px); }
.ruler span { width: 74px; text-align: center; font: 20px/28px "Liberation Sans", sans-serif; color: #555; background: linear-gradient(#bbb, #bbb) 0 4px / 2px 18px, linear-gradient(#bbb, #bbb) 20px 9px / 2px 10px, linear-gradient(#bbb, #bbb) 56px 9px / 2px 10px; background-repeat: no-repeat; }
.mark { position: absolute; }
.mark-left { left: 104px; top: -7px; }
.mark-right { left: 1466px; top: 14px; }
.paper { width: 1588px; padding: 0 75px 111px 113px; background: #fff; border: 1px solid #c4c4c4; border-top: 0; color: #000; font-family: "Liberation Sans", "Noto Sans CJK KR", sans-serif; white-space: nowrap; }
.line { font-size: 28px; line-height: 32px; }
.line-cut { display: flex; align-items: flex-end; height: 20px; padding-left: 12px; overflow: hidden; line-height: 36px; }
.line-dash { padding-left: 27px; }
.line-small { padding-left: 67px; font-size: 24px; line-height: 44px; }
.paper h2 { margin: 36px 0 4px; font: 700 38px/60px "DejaVu Sans", "Noto Sans CJK KR", sans-serif; }
.selection { width: 1415px; padding: 7px 7px 21px; background: #d1d8f1; }
table { width: 100%; table-layout: fixed; border-collapse: collapse; color: #232a48; font-size: 29px; line-height: 30px; border-left: 2px dashed #c0607f; border-right: 2px dashed #c0607f; }
.c1 { width: 260px; }
.c2 { width: 441px; }
th, td { height: 93px; padding: 0 0 2px; font-weight: 400; text-align: center; border-top: 2px solid #232a48; border-bottom: 2px solid #232a48; }
th { height: 67px; }
th + th, td + td { border-left: 3px solid #232a48; }
td:last-child { padding-left: 13px; text-align: left; }
.bullet { display: inline-block; width: 30px; font-family: "DejaVu Sans", sans-serif; font-size: 26px; }
.strong { font-weight: 500; }
small { display: block; font-size: 21px; line-height: 26px; }
.remark { padding-left: 12px; font-size: 30px; line-height: 60px; }
.remark-tight { line-height: 26px; }
.corners { display: flex; justify-content: space-between; margin: 98px 0 0 -37px; }
.corners i { width: 38px; height: 40px; border: solid #c4c4c4; border-width: 2px 2px 0 0; }
.corners i:last-child { border-width: 2px 0 0 2px; }

/* status bar */
.status { display: flex; align-items: center; gap: 40px; height: 48px; padding: 0 20px 0 38px; border-top: 2px solid #d3d3d3; font-size: 24px; }
.status span { padding-bottom: 2px; }
.views { display: flex; align-items: center; margin-left: auto; }
.views button { width: 64px; height: 46px; }
.sel-zoom { width: 256px; height: 40px; margin-left: 16px; padding-left: 8px; font-family: "Noto Sans", sans-serif; }
```
